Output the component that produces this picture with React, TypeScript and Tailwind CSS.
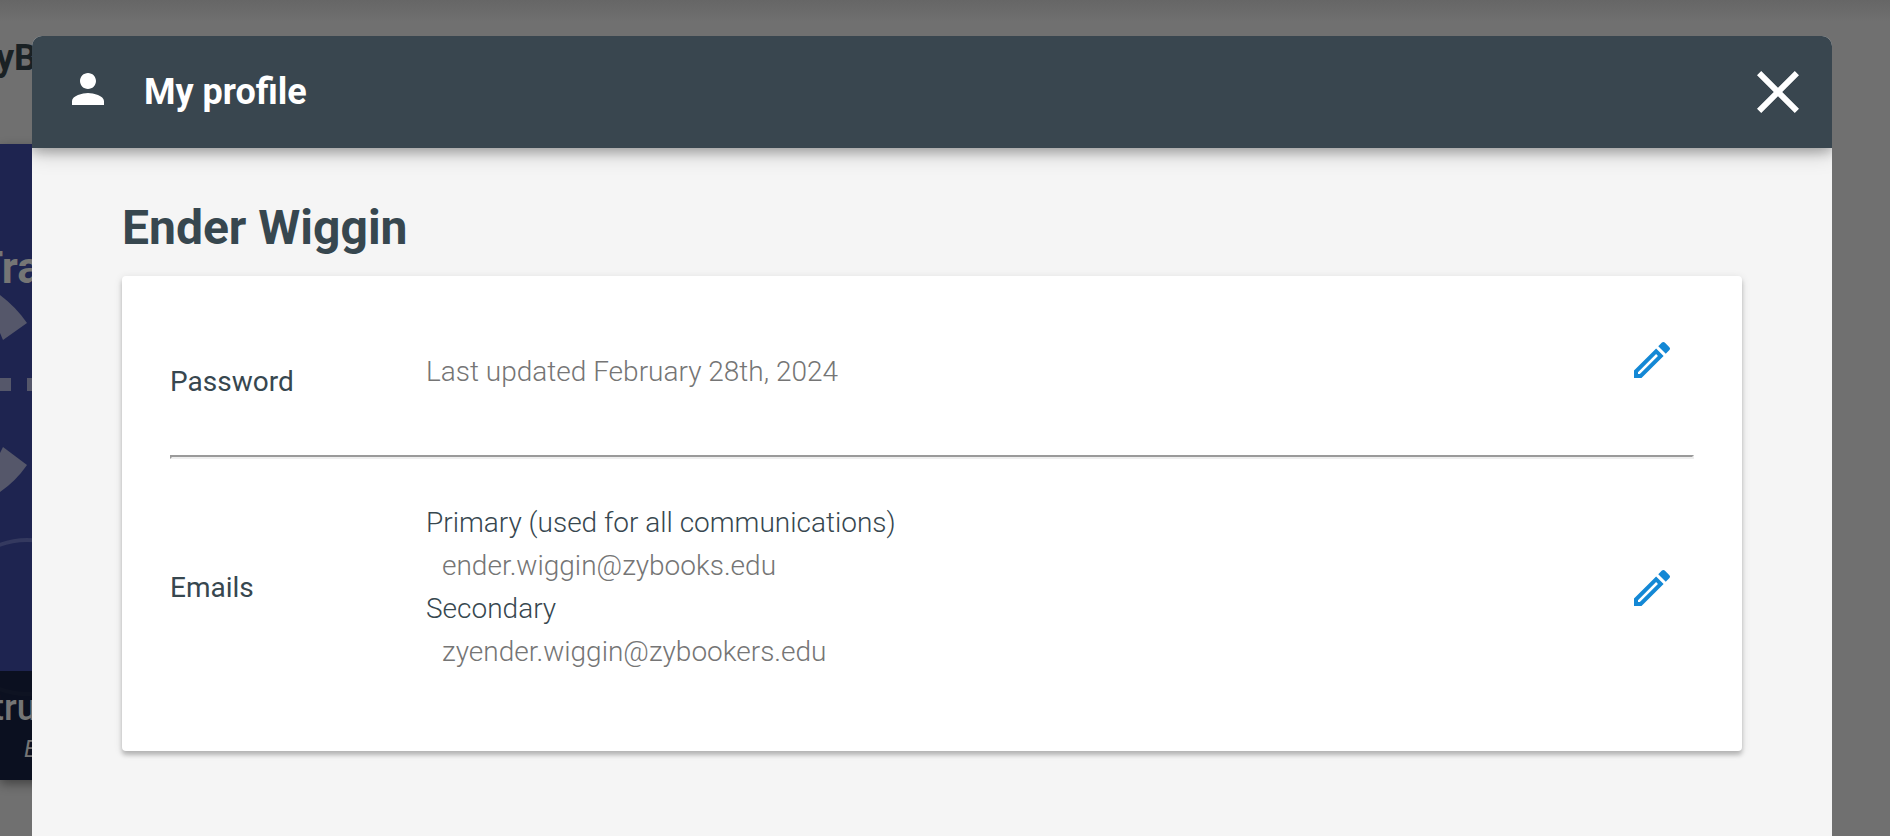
import type { ReactNode } from 'react'
import { MdClose, MdOutlineEdit, MdPerson } from 'react-icons/md'

interface EmailEntry {
  kind: string
  address: string
}

const emails: EmailEntry[] = [
  { kind: 'Primary (used for all communications)', address: 'ender.wiggin@zybooks.edu' },
  { kind: 'Secondary', address: 'zyender.wiggin@zybookers.edu' },
]

function EditButton({ label }: { label: string }) {
  return (
    <button type="button" aria-label={label} className="block cursor-pointer text-[#1488d5]">
      <MdOutlineEdit className="size-12" />
    </button>
  )
}

function ProfileRow({ label, action, children }: { label: string; action: ReactNode; children: ReactNode }) {
  return (
    <section className="flex items-center pr-[18px]">
      <h3 className="w-64 shrink-0 font-normal text-[#37474f]">{label}</h3>
      <div className="flex-1 min-w-0 font-light text-[#757575]">{children}</div>
      {action}
    </section>
  )
}

/* Library page sitting behind the dimmed layer */
function Backdrop() {
  return (
    <div aria-hidden="true" className="absolute inset-0 overflow-hidden bg-[#707070]">
      <div className="h-36 bg-linear-to-b from-[#666666] to-[#707070] to-15% pt-9">
        <p className="-ml-1 text-4xl/[44px] font-bold text-[#1a2124]">yB</p>
      </div>
      <div className="relative flex h-[636px] w-80 flex-col justify-between bg-[#1e2450] shadow-[0_4px_10px_rgba(0,0,0,0.4)]">
        <svg className="absolute inset-0" width="320" height="636" viewBox="0 0 320 636">
          <g fill="#55576a">
            <path d="M0 151Q16 163 27 179L3 196L0 189Z" />
            <path d="M0 309L3 303L27 321Q16 337 0 348Z" />
            <rect x="0" y="234" width="11" height="13" />
            <rect x="27" y="234" width="16" height="13" />
          </g>
          <circle cx="27" cy="473" r="77" fill="none" stroke="#34395f" strokeWidth="4" />
        </svg>
        <p className="relative -ml-6 pt-24 text-[44px]/[56px] font-bold text-[#757575]">Tra</p>
        <div className="relative h-[109px] bg-[#080d18]/85 pt-4 text-[#757575]">
          <p className="-ml-2 text-4xl/[42px] font-medium">tru</p>
          <p className="pl-6 text-2xl/10 font-normal italic">E</p>
        </div>
      </div>
    </div>
  )
}

export default function App() {
  return (
    <div className="relative flex min-h-screen flex-col font-[Roboto,sans-serif]">
      <Backdrop />

      <div
        role="dialog"
        aria-labelledby="profile-title"
        className="relative mt-9 mr-[58px] ml-8 flex flex-1 flex-col overflow-hidden rounded-t-[10px] bg-[#f5f5f5]"
      >
        <header className="flex h-28 items-center bg-[#39464f] pr-[18px] pl-8 text-white shadow-[0_4px_20px_rgba(0,0,0,0.25),0_4px_10px_rgba(0,0,0,0.2)]">
          <MdPerson className="mb-1.5 size-12" />
          <h1 id="profile-title" className="ml-8 flex-1 text-4xl/[42px] font-bold">
            My profile
          </h1>
          <button type="button" aria-label="Close" className="cursor-pointer">
            <MdClose className="size-[72px]" />
          </button>
        </header>

        <main className="px-[90px] pt-12 pb-20">
          <h2 className="text-5xl/[64px] font-bold text-[#37474f]">Ender Wiggin</h2>

          <div className="mt-4 rounded bg-white px-12 text-[28px]/[42px] shadow-[0_4px_4px_rgba(0,0,0,0.2),0_2px_8px_rgba(0,0,0,0.12)]">
            <div className="pt-[60px] pb-[27px]">
              <ProfileRow
                label="Password"
                action={
                  <div className="pb-11">
                    <EditButton label="Edit password" />
                  </div>
                }
              >
                <p className="pb-5">Last updated February 28th, 2024</p>
              </ProfileRow>
            </div>

            <hr className="border-2 border-[#eeeeee] border-t-[#9a9a9a] border-l-[#9a9a9a]" />

            <div className="pt-[43px] pb-[77px]">
              <ProfileRow label="Emails" action={<EditButton label="Edit emails" />}>
                <dl>
                  {emails.map((email) => (
                    <div key={email.kind}>
                      <dt className="text-[#37474f]">{email.kind}</dt>
                      <dd className="pl-4 leading-[44px]">{email.address}</dd>
                    </div>
                  ))}
                </dl>
              </ProfileRow>
            </div>
          </div>
        </main>
      </div>
    </div>
  )
}
